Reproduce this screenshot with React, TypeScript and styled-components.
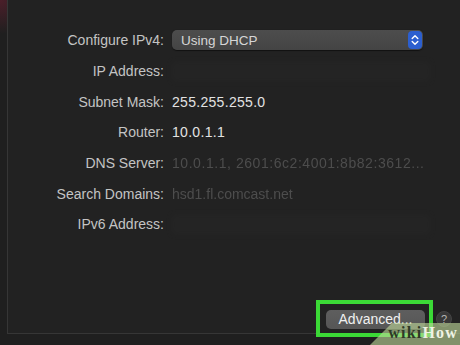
import React from 'react';
import styled, { createGlobalStyle } from 'styled-components';

const GlobalStyle = createGlobalStyle`
  html, body {
    margin: 0;
    padding: 0;
    width: 460px;
    height: 345px;
    overflow: hidden;
    background: #1d1d1d;
    font-family: 'Liberation Sans', Arial, sans-serif;
  }
`;

const Screen = styled.div`
  position: relative;
  width: 460px;
  height: 345px;
  overflow: hidden;
  background:
    radial-gradient(circle at 0 0, rgba(120, 30, 52, 0.5) 0, rgba(120, 30, 52, 0) 34px),
    #1f1f1f;
`;

const Frame = styled.div`
  display: flex;
  flex-direction: column;
  height: 334px;
  margin-left: 7px;
  border-left: 1px solid #363636;
  border-bottom: 1px solid #363636;
  background: #222222;
  box-sizing: border-box;
`;

const Form = styled.div`
  display: grid;
  grid-template-columns: 156px 1fr;
  grid-auto-rows: 30.7px;
  column-gap: 8px;
  align-items: center;
  padding: 25px 30px 0 0;
`;

const Label = styled.div`
  text-align: right;
  font-size: 14px;
  color: #c4c4c4;
  white-space: nowrap;
`;

const Value = styled.div<{ $dim?: boolean; $wide?: boolean }>`
  font-size: 14px;
  letter-spacing: ${(p) => (p.$wide ? '0.55px' : p.$dim ? '0' : '0.3px')};
  color: ${(p) => (p.$dim ? '#4d4d4d' : '#e2e2e2')};
  white-space: nowrap;
  overflow: hidden;
  filter: ${(p) => (p.$dim ? 'blur(0.5px)' : 'none')};
`;

const HiddenField = styled.div`
  height: 19px;
  width: 258px;
  border-radius: 3px;
  background: #252525;
  filter: blur(2.5px);
  opacity: 0.8;
`;

const Popup = styled.div`
  display: flex;
  align-items: center;
  justify-content: space-between;
  width: 251px;
  height: 20px;
  box-sizing: border-box;
  padding-left: 9px;
  border-radius: 5px;
  background: linear-gradient(#4d4d4d, #444444);
  box-shadow: 0 0.5px 1px rgba(0, 0, 0, 0.5);
  font-size: 13.5px;
  color: #d6d6d6;
`;

const Stepper = styled.div`
  display: flex;
  align-items: center;
  justify-content: center;
  width: 14px;
  height: 18px;
  margin-right: 1px;
  border-radius: 4px;
  background: #2c5fcf;
`;

const Footer = styled.div`
  display: flex;
  align-items: center;
  justify-content: flex-end;
  gap: 3px;
  margin-top: auto;
  margin-bottom: -4px;
  padding-right: 8px;
`;

const Highlight = styled.div`
  padding: 6px 4px 4px 6px;
  border: 4px solid #3bd936;
`;

const Button = styled.div`
  width: 99px;
  height: 19px;
  border-radius: 5px;
  background: linear-gradient(#5e5e5e, #565656);
  color: #f0f0f0;
  font-size: 14px;
  line-height: 19px;
  text-align: center;
`;

const Help = styled.div`
  width: 14px;
  height: 14px;
  margin-top: 1px;
  border-radius: 50%;
  background: #383838;
  border: 1px solid #444444;
  color: #b5b5b5;
  font-size: 11px;
  line-height: 14px;
  text-align: center;
`;

const Watermark = styled.div`
  position: absolute;
  right: 0;
  bottom: 0;
  width: 90px;
  height: 22px;
  display: flex;
  align-items: flex-end;
  justify-content: flex-end;
  padding: 0 2px 6px 0;
  box-sizing: border-box;
  background: rgba(190, 216, 154, 0.62);
  clip-path: polygon(22px 0, 100% 0, 100% 100%, 0 100%);
  font-family: 'Liberation Serif', 'Times New Roman', serif;
  font-weight: bold;
  font-size: 16px;
  line-height: 12px;
  letter-spacing: 1.2px;
`;

const Wiki = styled.span`
  color: #2e3a27;
`;

const How = styled.span`
  color: #eef3e4;
`;

const Arrows = () => (
  <svg width="8" height="12" viewBox="0 0 8 12" fill="none">
    <path d="M1.2 4.6 4 1.8l2.8 2.8M1.2 7.4 4 10.2l2.8-2.8" stroke="#fff" strokeWidth="1.4" strokeLinecap="round" strokeLinejoin="round" />
  </svg>
);

export default function App() {
  return (
    <Screen>
      <GlobalStyle />
      <Frame>
        <Form>
          <Label>Configure IPv4:</Label>
          <Popup>
            Using DHCP
            <Stepper>
              <Arrows />
            </Stepper>
          </Popup>
          <Label>IP Address:</Label>
          <HiddenField />
          <Label>Subnet Mask:</Label>
          <Value>255.255.255.0</Value>
          <Label>Router:</Label>
          <Value>10.0.1.1</Value>
          <Label>DNS Server:</Label>
          <Value $dim $wide>10.0.1.1, 2601:6c2:4001:8b82:3612...</Value>
          <Label>Search Domains:</Label>
          <Value $dim>hsd1.fl.comcast.net</Value>
          <Label>IPv6 Address:</Label>
          <HiddenField />
        </Form>
        <Footer>
          <Highlight>
            <Button>Advanced...</Button>
          </Highlight>
          <Help>?</Help>
        </Footer>
      </Frame>
      <Watermark>
        <Wiki>wiki</Wiki>
        <How>How</How>
      </Watermark>
    </Screen>
  );
}
